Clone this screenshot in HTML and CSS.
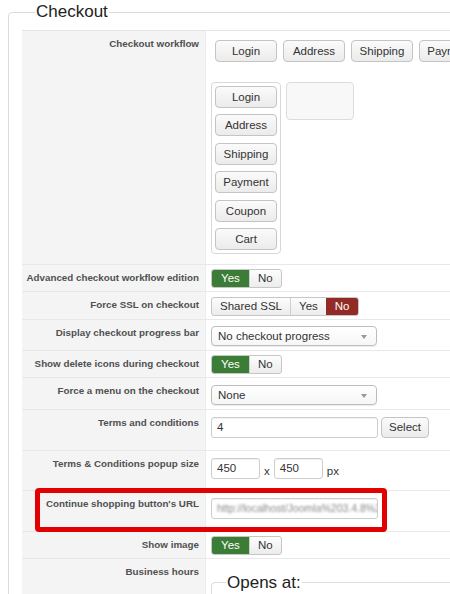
FILE: index.html
```html
<!DOCTYPE html>
<html lang="en">
<head>
    <meta charset="UTF-8">
    <meta name="viewport" content="width=device-width, initial-scale=1.0">
    <title>Checkout settings</title>
    <link rel="stylesheet" href="styles.css">
</head>
<body>
    <fieldset class="group">
        <legend>Checkout</legend>
        <div class="settings">
            <div class="row workflow">
                <div class="label">Checkout workflow</div>
                <div class="ctrl">
                    <div class="steps">
                        <span class="btn">Login</span>
                        <span class="btn">Address</span>
                        <span class="btn">Shipping</span>
                        <span class="btn">Payment</span>
                    </div>
                    <div class="lists">
                        <div class="stack">
                            <span class="btn">Login</span>
                            <span class="btn">Address</span>
                            <span class="btn">Shipping</span>
                            <span class="btn">Payment</span>
                            <span class="btn">Coupon</span>
                            <span class="btn">Cart</span>
                        </div>
                        <div class="dropzone"></div>
                    </div>
                </div>
            </div>
            <div class="row">
                <div class="label">Advanced checkout workflow edition</div>
                <div class="ctrl">
                    <div class="toggle"><span class="yes on">Yes</span><span>No</span></div>
                </div>
            </div>
            <div class="row ssl">
                <div class="label">Force SSL on checkout</div>
                <div class="ctrl">
                    <div class="toggle"><span>Shared SSL</span><span>Yes</span><span class="no on">No</span></div>
                </div>
            </div>
            <div class="row pick">
                <div class="label">Display checkout progress bar</div>
                <div class="ctrl">
                    <div class="select">No checkout progress</div>
                </div>
            </div>
            <div class="row">
                <div class="label">Show delete icons during checkout</div>
                <div class="ctrl">
                    <div class="toggle"><span class="yes on">Yes</span><span>No</span></div>
                </div>
            </div>
            <div class="row pick menu">
                <div class="label">Force a menu on the checkout</div>
                <div class="ctrl">
                    <div class="select">None</div>
                </div>
            </div>
            <div class="row tall">
                <div class="label">Terms and conditions</div>
                <div class="ctrl">
                    <span class="input wide">4</span>
                    <span class="btn small">Select</span>
                </div>
            </div>
            <div class="row tall size">
                <div class="label">Terms &amp; Conditions popup size</div>
                <div class="ctrl">
                    <span class="input short">450</span>
                    <span class="unit">x</span>
                    <span class="input short">450</span>
                    <span class="unit">px</span>
                </div>
            </div>
            <div class="row tall marked">
                <div class="label">Continue shopping button's URL</div>
                <div class="ctrl">
                    <span class="input wide"><span class="blurred">http://localhost/Joomla%203.4.8%2</span></span>
                </div>
                <div class="highlight"></div>
            </div>
            <div class="row">
                <div class="label">Show image</div>
                <div class="ctrl">
                    <div class="toggle"><span class="yes on">Yes</span><span>No</span></div>
                </div>
            </div>
            <div class="row hours">
                <div class="label">Business hours</div>
                <div class="ctrl">
                    <fieldset class="sub">
                        <legend>Opens at:</legend>
                    </fieldset>
                </div>
            </div>
        </div>
    </fieldset>
</body>
</html>
```

FILE: styles.css
```css
body {
    margin: 0;
    padding: 2px 0 0 8px;
    font-family: "Liberation Sans", Arial, sans-serif;
    color: #333;
    background: white;
    overflow: hidden;
}
.group {
    width: 520px;
    margin: 0;
    padding: 8px 0 0 13px;
    border: 1px solid #dcdcdc;
    border-radius: 4px;
}
.group legend {
    font-size: 17px;
    color: #222;
    padding: 0 1px;
    margin-left: 13px;
}
.settings {
    border-top: 1px solid #e4e4e4;
}
.row {
    position: relative;
    display: grid;
    grid-template-columns: 184px 1fr;
    border-bottom: 1px solid #e8e8e8;
}
.label {
    background: #f4f4f4;
    border-right: 1px solid #ececec;
    font-size: 9.8px;
    font-weight: bold;
    color: #505050;
    text-align: right;
    white-space: nowrap;
    padding: 6px 6px 0 0;
    line-height: 14px;
}
.ctrl {
    padding: 4px 5px 3px;
    display: flex;
    align-items: flex-start;
    gap: 3px;
}

/* plain buttons */
.btn {
    display: inline-flex;
    align-items: center;
    justify-content: center;
    box-sizing: border-box;
    width: 62px;
    height: 22px;
    font-size: 11.5px;
    color: #333;
    border: 1px solid #c4c4c4;
    border-radius: 4px;
    background: linear-gradient(#fbfbfb, #ebebeb);
}
.btn.small {
    width: 48px;
    height: 21px;
}

/* workflow editor */
.workflow .ctrl {
    flex-direction: column;
    gap: 20px;
    padding: 9px 5px 10px;
}
.steps {
    display: flex;
    gap: 6px;
    margin-left: 4px;
}
.lists {
    display: flex;
    gap: 5px;
    align-items: flex-start;
}
.stack {
    display: flex;
    flex-direction: column;
    gap: 6.4px;
    padding: 3px;
    border: 1px solid #d8d8d8;
    border-radius: 4px;
}
.dropzone {
    width: 68px;
    height: 38px;
    box-sizing: border-box;
    border: 1px solid #dcdcdc;
    border-radius: 4px;
    background: #f8f8f8;
}

/* yes / no switches */
.toggle {
    display: flex;
    box-sizing: border-box;
    height: 19px;
    border: 1px solid #c6c6c6;
    border-radius: 3px;
    overflow: hidden;
    background: linear-gradient(#fdfdfd, #ececec);
    font-size: 11.5px;
}
.toggle span {
    display: flex;
    align-items: center;
    padding: 0 8px;
    border-left: 1px solid #cfcfcf;
}
.toggle span:first-child {
    border-left: none;
}
.toggle .yes {
    width: 37px;
    box-sizing: border-box;
    justify-content: center;
}
.toggle .on {
    color: white;
    border-left: none;
}
.toggle .yes.on {
    background: #3b7d36;
}
.toggle .no.on {
    background: #922a25;
    padding: 0 9px;
}
.ssl .ctrl {
    padding-top: 5px;
}

/* dropdowns */
.pick .ctrl {
    padding: 6px 5px 4px;
}
.menu .ctrl {
    padding-top: 7px;
}
.select {
    position: relative;
    box-sizing: border-box;
    width: 166px;
    height: 20px;
    padding: 3px 6px;
    font-size: 11.5px;
    border: 1px solid #bdbdbd;
    border-radius: 4px;
    background: linear-gradient(#fff, #f6f6f6);
    box-shadow: 0 1px 1px rgba(0, 0, 0, 0.08);
}
.select::after {
    content: "";
    position: absolute;
    right: 9px;
    top: 8px;
    border: 3px solid transparent;
    border-top: 4px solid #999;
    border-bottom: none;
}

/* text inputs */
.tall .ctrl {
    padding: 7px 5px 12px;
}
.size .ctrl {
    padding-bottom: 11px;
}
.input {
    box-sizing: border-box;
    height: 21px;
    padding: 3px 5px;
    font-size: 11.5px;
    border: 1px solid #cdcdcd;
    border-radius: 3px;
    box-shadow: inset 0 1px 1px rgba(0, 0, 0, 0.06);
    background: white;
    white-space: nowrap;
    overflow: hidden;
}
.input.wide {
    width: 167px;
}
.input.short {
    width: 49px;
}
.unit {
    font-size: 11.5px;
    padding-top: 7px;
    margin: 0 1px;
}
.blurred {
    color: #888;
    font-size: 10.5px;
    filter: blur(1.3px);
}
.highlight {
    position: absolute;
    left: 13px;
    top: -3px;
    width: 352px;
    height: 44px;
    box-sizing: border-box;
    border: 5px solid #e30000;
    border-radius: 4px;
}

/* business hours */
.hours .ctrl {
    padding: 14px 5px 0 5px;
}
.sub {
    width: 260px;
    height: 40px;
    margin: 0;
    padding: 0;
    border: 1px solid #dcdcdc;
    border-radius: 4px;
}
.sub legend {
    font-size: 17px;
    color: #222;
    margin-left: 14px;
    padding: 0 1px;
}
```
